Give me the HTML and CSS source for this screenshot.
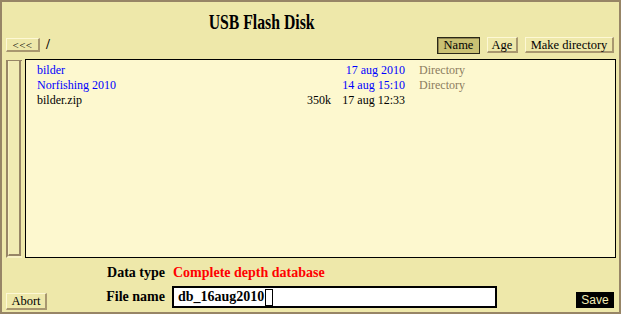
FILE: index.html
```html
<!DOCTYPE html>
<html>
<head>
<meta charset="utf-8">
<link rel="stylesheet" href="styles.css">
</head>
<body>
<div class="frame">
  <div class="title"><span class="title-text">USB Flash Disk</span></div>
  <div class="toolbar">
    <button class="btn btn-back">&lt;&lt;&lt;</button>
    <span class="path">/</span>
    <span class="spacer"></span>
    <div class="sort">
      <button class="btn btn-active">Name</button>
      <button class="btn btn-age">Age</button>
      <button class="btn btn-mkdir">Make directory</button>
    </div>
  </div>
  <div class="main">
    <div class="scroll"><div class="thumb"></div></div>
    <div class="list">
      <div class="row dir"><span class="name">bilder</span><span class="size"></span><span class="date">17 aug 2010</span><span class="type">Directory</span></div>
      <div class="row dir"><span class="name">Norfishing 2010</span><span class="size"></span><span class="date">14 aug 15:10</span><span class="type">Directory</span></div>
      <div class="row file"><span class="name">bilder.zip</span><span class="size">350k</span><span class="date">17 aug 12:33</span><span class="type"></span></div>
    </div>
  </div>
  <div class="bottom">
    <div class="label">Data type</div>
    <div class="value-red">Complete depth database</div>
    <div></div>
    <div class="label-cell"><button class="btn btn-abort">Abort</button><span class="label">File name</span></div>
    <div class="input"><span class="input-text">db_16aug2010</span><span class="cursor"></span></div>
    <div class="save-cell"><button class="btn-save">Save</button></div>
  </div>
</div>
</body>
</html>
```
FILE: styles.css
```css
html, body {
  margin: 0;
  padding: 0;
}
body {
  width: 621px;
  height: 314px;
  overflow: hidden;
  font-family: "Liberation Serif", "Times New Roman", serif;
}
.frame {
  box-sizing: border-box;
  width: 621px;
  height: 314px;
  border: 2px solid #978566;
  background: #eee8aa;
  display: flex;
  flex-direction: column;
}
.title {
  padding-top: 8px;
  padding-right: 97px;
  height: 26px;
  line-height: 24px;
  text-align: center;
}
.title-text {
  display: inline-block;
  font-size: 21px;
  font-weight: bold;
  color: #000;
  transform: scaleX(0.75);
}
.toolbar {
  height: 18px;
  display: flex;
  align-items: center;
  padding: 0 5px 0 4px;
  gap: 6px;
}
.spacer {
  flex: 1;
}
.sort {
  display: flex;
  align-items: center;
  gap: 7px;
}
.btn {
  box-sizing: border-box;
  font-family: "Liberation Serif", "Times New Roman", serif;
  font-size: 12.5px;
  line-height: 12px;
  color: #000;
  background: #eee8aa;
  border-style: solid;
  border-width: 1px 2px 2px 1px;
  border-color: #fdf8d4 #a8976f #a8976f #fdf8d4;
  padding: 0;
  height: 16px;
  margin: 0;
}
.btn-back {
  height: 14px;
  width: 34px;
  font-size: 11px;
  letter-spacing: 0.5px;
}
.path {
  font-size: 14px;
  font-weight: bold;
}
.btn-active {
  height: 17px;
  width: 43px;
  background: #cac173;
  border: 1px solid #2a2818;
  box-shadow: inset 1px 1px 0 #8e8350;
}
.btn-age {
  width: 31px;
}
.btn-mkdir {
  width: 89px;
}
.main {
  margin-top: 5px;
  height: 199px;
  display: flex;
  padding: 0 3px 0 4px;
  gap: 3px;
}
.scroll {
  box-sizing: border-box;
  width: 16px;
  margin-top: 1px;
  border-left: 2px solid #978566;
  border-top: 1px solid #978566;
  border-bottom: 2px solid #f8f2c4;
  background: #eee8aa;
  display: flex;
}
.thumb {
  flex: 1;
  border-left: 1px solid #f8f2c4;
  border-right: 2px solid #978566;
  border-bottom: 2px solid #978566;
  margin-right: 1px;
  background: #f1ebb3;
}
.list {
  flex: 1;
  box-sizing: border-box;
  border: 1px solid #000;
  background: #fdf8cf;
  padding-top: 3px;
  font-size: 12px;
  line-height: 15px;
}
.row {
  display: grid;
  grid-template-columns: 254px 51px 74px 1fr;
}
.name {
  padding-left: 11px;
}
.size, .date {
  text-align: right;
}
.type {
  padding-left: 14px;
  color: #8c7c5e;
}
.dir {
  color: #0000ff;
}
.file {
  color: #000;
}
.bottom {
  display: grid;
  grid-template-columns: 159px 325px 1fr;
  column-gap: 7px;
  row-gap: 4px;
  padding: 6px 5px 0 4px;
}
.label {
  font-size: 14px;
  font-weight: bold;
  line-height: 18px;
  text-align: right;
}
.value-red {
  font-size: 14px;
  font-weight: bold;
  line-height: 18px;
  color: #ff0000;
  padding-left: 1px;
}
.label-cell {
  display: flex;
  justify-content: space-between;
  align-items: center;
  height: 22px;
}
.label-cell .label {
  margin-top: -1px;
}
.btn-abort {
  height: 17px;
  width: 41px;
  margin-top: 8px;
}
.input {
  box-sizing: border-box;
  height: 22px;
  width: 325px;
  background: #fff;
  border: 2px solid #000;
  display: flex;
  align-items: center;
  padding-left: 4px;
}
.input-text {
  font-size: 14px;
  font-weight: bold;
  line-height: 16px;
}
.cursor {
  box-sizing: border-box;
  width: 8px;
  height: 17px;
  border: 1px solid #000;
  margin-left: 1px;
}
.save-cell {
  display: flex;
  justify-content: flex-end;
  align-items: flex-end;
}
.btn-save {
  box-sizing: border-box;
  height: 16px;
  width: 38px;
  padding: 0;
  border: none;
  background: #000;
  color: #f4eeb8;
  font-family: "Liberation Sans", Arial, sans-serif;
  font-size: 12px;
  line-height: 16px;
}
```
